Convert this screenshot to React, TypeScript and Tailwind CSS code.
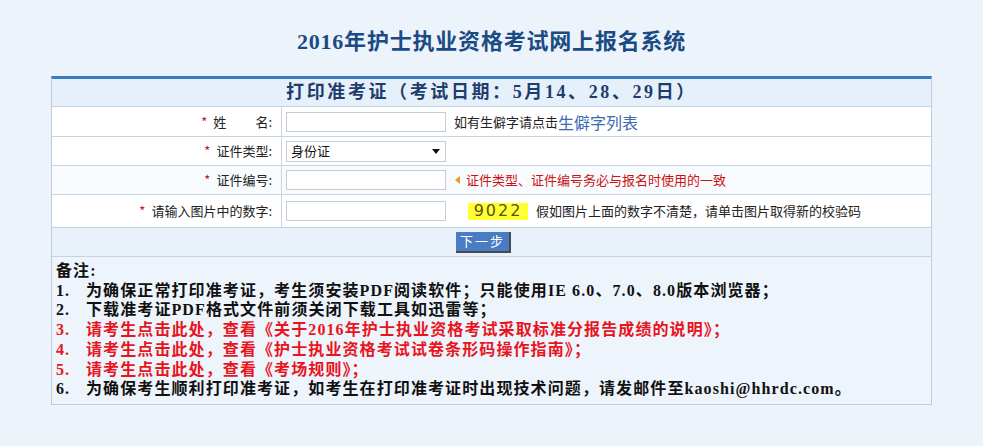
const notes: { n: string; text: string; red?: boolean }[] = [
  { n: '1.', text: '为确保正常打印准考证，考生须安装PDF阅读软件；只能使用IE 6.0、7.0、8.0版本浏览器；' },
  { n: '2.', text: '下载准考证PDF格式文件前须关闭下载工具如迅雷等；' },
  { n: '3.', text: '请考生点击此处，查看《关于2016年护士执业资格考试采取标准分报告成绩的说明》；', red: true },
  { n: '4.', text: '请考生点击此处，查看《护士执业资格考试试卷条形码操作指南》；', red: true },
  { n: '5.', text: '请考生点击此处，查看《考场规则》；', red: true },
  { n: '6.', text: '为确保考生顺利打印准考证，如考生在打印准考证时出现技术问题，请发邮件至kaoshi@hhrdc.com。' },
];

function Label({ children }: { children: React.ReactNode }) {
  return (
    <div className="flex items-center justify-end border-r border-[#c6d5e6] pr-[9px] text-[13px] text-[#222]">
      <span className="mr-[6px] text-[#c8102e]">*</span>
      {children}
    </div>
  );
}

function TextInput() {
  return <div className="h-[20px] w-[160px] border border-[#c5ccd6] bg-white" />;
}

function App() {
  return (
    <div className="min-h-screen bg-[#edf3fa] font-['Noto_Sans_CJK_SC',sans-serif]">
      <h1 className="h-[76px] pt-[28px] text-center font-['Liberation_Serif','Noto_Sans_CJK_SC',serif] text-[22px] leading-[28px] font-bold tracking-[0.8px] text-[#1b4b85]">
        2016年护士执业资格考试网上报名系统
      </h1>

      <div className="ml-[51px] w-[881px] border-x border-b border-t-[3px] border-x-[#bccbdd] border-b-[#bccbdd] border-t-[#3b7dc0]">
        <div className="flex h-[28px] items-center justify-center border-b border-[#c3d3e6] bg-[#e6f0fb] font-['Liberation_Serif','Noto_Sans_CJK_SC',serif] text-[18px] font-bold tracking-[2.6px] text-[#1f3d6c]">
          打印准考证（考试日期：5月14、28、29日）
        </div>

        <div className="grid h-[30px] grid-cols-[230px_1fr] border-b border-[#c6d5e6] bg-white">
          <Label>
            姓<span className="inline-block w-[29px]" />名:
          </Label>
          <div className="flex items-center pl-[4px]">
            <TextInput />
            <span className="ml-[8px] text-[13px] text-[#222]">如有生僻字请点击</span>
            <span className="text-[16px] text-[#3a6ab0]">生僻字列表</span>
          </div>
        </div>

        <div className="grid h-[29px] grid-cols-[230px_1fr] border-b border-[#c6d5e6] bg-white">
          <Label>证件类型:</Label>
          <div className="flex items-center pl-[4px]">
            <div className="flex h-[21px] w-[160px] items-center justify-between border border-[#c5ccd6] bg-white pr-[5px] pl-[4px] text-[13px] text-[#111]">
              <span>身份证</span>
              <svg width="8" height="5" viewBox="0 0 8 5">
                <path d="M0 0h8L4 5z" fill="#111" />
              </svg>
            </div>
          </div>
        </div>

        <div className="grid h-[29px] grid-cols-[230px_1fr] border-b border-[#c6d5e6] bg-[#f8fbfe]">
          <Label>证件编号:</Label>
          <div className="flex items-center pl-[4px]">
            <TextInput />
            <svg className="ml-[9px]" width="5" height="8" viewBox="0 0 5 8">
              <path d="M5 0v8L0 4z" fill="#f39a1e" />
            </svg>
            <span className="ml-[6px] text-[13px] text-[#cc1111]">证件类型、证件编号务必与报名时使用的一致</span>
          </div>
        </div>

        <div className="grid h-[33px] grid-cols-[230px_1fr] border-b border-[#c3d3e6] bg-white">
          <Label>请输入图片中的数字:</Label>
          <div className="flex items-center pl-[4px]">
            <TextInput />
            <div className="ml-[22px] flex h-[17px] w-[60px] items-center justify-center bg-[#ffff33] font-['DejaVu_Sans',sans-serif] text-[16px] tracking-[2px] text-[#55550f]">
              9022
            </div>
            <span className="ml-[8px] text-[13px] text-[#222]">假如图片上面的数字不清楚，请单击图片取得新的校验码</span>
          </div>
        </div>

        <div className="flex h-[29px] items-center border-b border-[#c3d3e6] bg-[#e9f1fa] pl-[404px]">
          <button className="h-[21px] w-[55px] border-r-2 border-b-2 border-r-[#4a4a4a] border-b-[#4a4a4a] bg-[#4a7cc4] text-[13px] leading-[18px] tracking-[2px] text-white">
            下一步
          </button>
        </div>

        <div className="bg-[#eef4fb] px-[4px] pt-[4px] pb-[5px] font-['Liberation_Serif','Noto_Sans_CJK_SC',serif] text-[16px] leading-[19.7px] font-bold tracking-[1.1px] text-[#111]">
          <div>备注:</div>
          {notes.map((note) => (
            <div key={note.n} className={note.red ? 'text-[#e8141e]' : ''}>
              <span className="inline-block w-[30px]">{note.n}</span>
              {note.text}
            </div>
          ))}
        </div>
      </div>
    </div>
  );
}

export default App;
